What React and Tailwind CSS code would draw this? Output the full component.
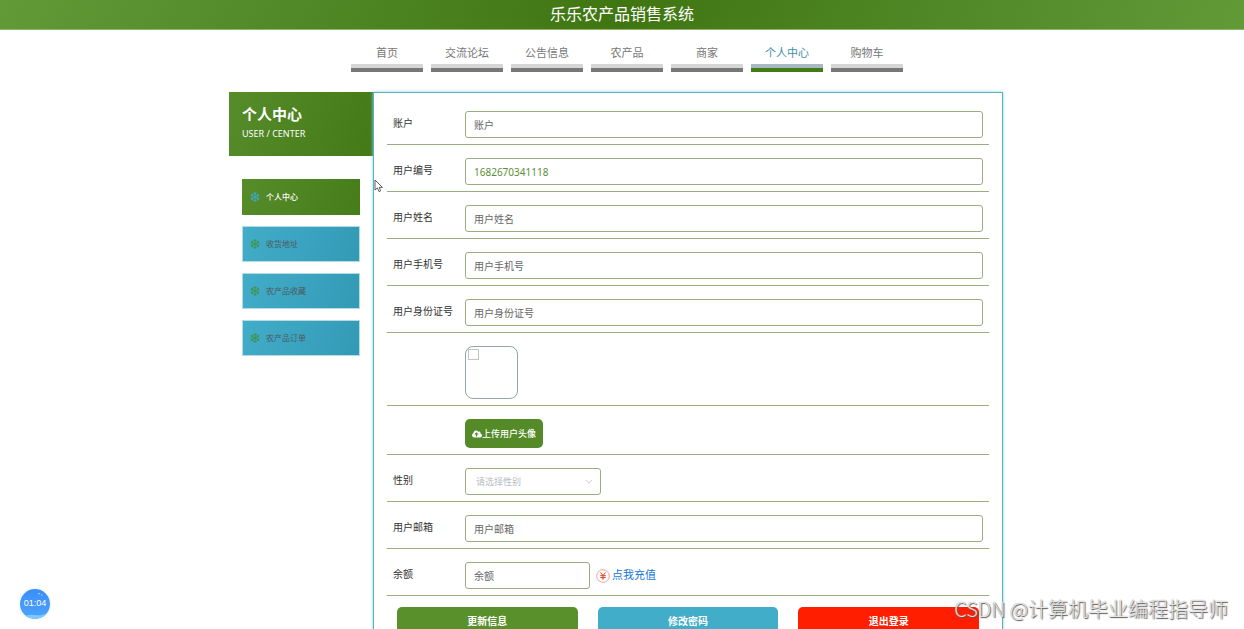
import React, { useState } from "react";
import { FaCloudUploadAlt, FaRegSnowflake } from "react-icons/fa";

const NAV = ["首页", "交流论坛", "公告信息", "农产品", "商家", "个人中心", "购物车"];
const MENU = ["个人中心", "收货地址", "农产品收藏", "农产品订单"];

const field = "block h-[27px] rounded-[3px] border border-[#9aad80] bg-white px-2 text-[10px] text-[#5c8f35] placeholder:text-[#666] focus:outline-none";

function Row({ id, label, children }) {
  return (
    <div className="flex items-center border-b border-[#9aad80] px-1.5 pt-[13px] pb-1.5">
      {label && <label htmlFor={id} className="w-[72px] shrink-0 pb-1 text-[10px] leading-4 text-[#333]">{label}</label>}
      {!label && <div className="w-[72px] shrink-0" />}
      {children}
    </div>
  );
}

function NavItem({ text, active }) {
  return (
    <a
      href="#"
      className={active
        ? "w-[72px] border-b-4 border-[#437c16] text-center text-[#3f8ea6]"
        : "w-[72px] border-b-4 border-[#777] text-center text-[#777]"}
    >
      <span className="block pt-2.5 pb-[3px] text-[11px] leading-4">{text}</span>
      <span className={active ? "block h-1 bg-[#a9b9c4]" : "block h-1 bg-[#d6d6d6]"} />
    </a>
  );
}

function MenuItem({ text, active }) {
  return (
    <a
      href="#"
      className={active
        ? "flex h-9 items-center gap-1.5 bg-linear-110 from-[#568c29] to-[#467c19] pl-2 text-[8px] font-medium text-white"
        : "flex h-9 items-center gap-1.5 border border-[#b5dbe5] bg-linear-110 from-[#42adc9] to-[#339ab5] pl-[7px] text-[8px] text-[#4d5a5e]"}
    >
      <FaRegSnowflake className={active ? "size-2.5 text-[#3fa9c4]" : "size-2.5 text-[#3e9450]"} />
      {text}
    </a>
  );
}

export default function App() {
  const [form, setForm] = useState({ account: "", code: "1682670341118", name: "", phone: "", idCard: "", gender: "", email: "", balance: "" });
  const bind = (key) => ({ id: key, value: form[key], onChange: (e) => setForm({ ...form, [key]: e.target.value }) });

  return (
    <div className="relative h-screen overflow-hidden bg-white font-['Noto_Sans','Noto_Sans_CJK_SC',sans-serif]">
      <header className="border-b border-[#8fb56c] bg-linear-110 from-[#639a38] via-[#3f7611] to-[#639a38] text-center text-white">
        <h1 className="h-[29px] text-base leading-7">乐乐农产品销售系统</h1>
      </header>

      <nav className="flex justify-center gap-2 pt-[5px] pl-2.5">
        {NAV.map((text) => <NavItem key={text} text={text} active={text === "个人中心"} />)}
      </nav>

      <main className="mt-5 pr-3">
        <div className="mx-auto flex w-full max-w-[774px]">
          <aside className="w-36 shrink-0">
            <div className="h-16 bg-linear-110 from-[#568c29] to-[#437a16] px-[13px] pt-2.5 text-white">
              <h2 className="text-[15px] leading-6 font-bold">个人中心</h2>
              <p className="text-[9px] leading-4">USER / CENTER</p>
            </div>
            <div className="mt-[23px] flex flex-col gap-[11px] px-[13px]">
              {MENU.map((text) => <MenuItem key={text} text={text} active={text === "个人中心"} />)}
            </div>
          </aside>

          <form className="min-w-0 flex-1 border border-[#62aebf] px-[13px] pt-[5px] pb-5 shadow-[0_0_3px_#7fd4e6]" onSubmit={(e) => e.preventDefault()}>
            <Row id="account" label="账户"><input className={`${field} w-full`} placeholder="账户" {...bind("account")} /></Row>
            <Row id="code" label="用户编号"><input className={`${field} w-full`} {...bind("code")} /></Row>
            <Row id="name" label="用户姓名"><input className={`${field} w-full`} placeholder="用户姓名" {...bind("name")} /></Row>
            <Row id="phone" label="用户手机号"><input className={`${field} w-full`} placeholder="用户手机号" {...bind("phone")} /></Row>
            <Row id="idCard" label="用户身份证号"><input className={`${field} w-full`} placeholder="用户身份证号" {...bind("idCard")} /></Row>
            <Row>
              <div className="size-[53px] rounded-lg border border-[#93a5ab] p-0.5">
                <div className="size-[11px] border border-[#c4c4c4]" />
              </div>
            </Row>
            <Row>
              <button type="button" className="flex h-[29px] w-[78px] items-center justify-center rounded-[5px] bg-[#548a27] text-[9px] font-medium text-white">
                <FaCloudUploadAlt className="size-2.5" />上传用户头像
              </button>
            </Row>
            <Row id="gender" label="性别">
              <div className="relative">
                <select className="block h-[27px] w-[136px] appearance-none rounded-[3px] border border-[#9aad80] bg-white px-2.5 text-[9px] text-[#b8bcc4]" {...bind("gender")}>
                  <option value="">请选择性别</option>
                  <option value="男">男</option>
                  <option value="女">女</option>
                </select>
                <svg className="pointer-events-none absolute top-2.5 right-2 h-2 w-2" viewBox="0 0 8 8" fill="none" stroke="#b8bcc4" strokeWidth="0.8">
                  <path d="M0.800 2l3.200 3.200 3.200-3.200" />
                </svg>
              </div>
            </Row>
            <Row id="email" label="用户邮箱"><input className={`${field} w-full`} placeholder="用户邮箱" {...bind("email")} /></Row>
            <Row id="balance" label="余额">
              <input className={`${field} w-[125px]`} placeholder="余额" {...bind("balance")} />
              <a href="#" className="ml-1.5 flex items-center gap-0.5 text-[11px] text-[#1677d2]">
                <svg className="size-3.5" viewBox="0 0 14 14" fill="none">
                  <circle cx="7" cy="7" r="6.3" stroke="#e58f80" strokeWidth="0.8" />
                  <path d="M4.5 3.5L7 6.5l2.5-3M4.300 6.700h5.400M4.300 8.600h5.400M7 6.500v4.300" stroke="#dc3a20" />
                </svg>
                点我充值
              </a>
            </Row>
            <div className="mt-[11px] grid grid-cols-3 gap-5 px-2.5 text-[10px] font-bold text-white">
              <button type="submit" className="h-7 rounded-[5px] bg-[#5a902c]">更新信息</button>
              <button type="button" className="h-7 rounded-[5px] bg-[#42adc9]">修改密码</button>
              <button type="button" className="h-7 rounded-[5px] bg-[#ff1e00]">退出登录</button>
            </div>
          </form>
        </div>
      </main>

      <svg className="absolute top-[179px] left-[374px] h-3.5 w-2.5" viewBox="0 0 10 14">
        <path d="M1 1v10l2.4-2.1L5 12.6l1.700-.8-1.500-3.400h3.200z" fill="#fff" stroke="#333" strokeWidth="0.8" />
      </svg>

      <div className="absolute bottom-2.5 left-5 flex size-[30px] items-center justify-center overflow-hidden rounded-full bg-linear-to-b from-[#3a8dfa] to-[#4ea3fb] font-['Liberation_Sans',sans-serif] text-[9px] text-white shadow-[0_0_3px_#d5e6f8]">
        <svg className="absolute inset-0 size-full" viewBox="0 0 30 30" fill="none">
          <path d="M5 27q5-2 10-1t10-1v5H5z" fill="#7cc9fb" />
          <path d="M18 4.500q3 .6 5 2.500" stroke="#a9d4ff" strokeDasharray="2 1" />
        </svg>
        <span className="relative">01:04</span>
      </div>

      <div className="absolute right-4 bottom-1 font-['Noto_Sans_CJK_SC',sans-serif] text-[20px] leading-8 font-light text-white/80 [text-shadow:1px_1px_1px_#555,0_0_1px_#777]">
        CSDN @计算机毕业编程指导师
      </div>
    </div>
  );
}
